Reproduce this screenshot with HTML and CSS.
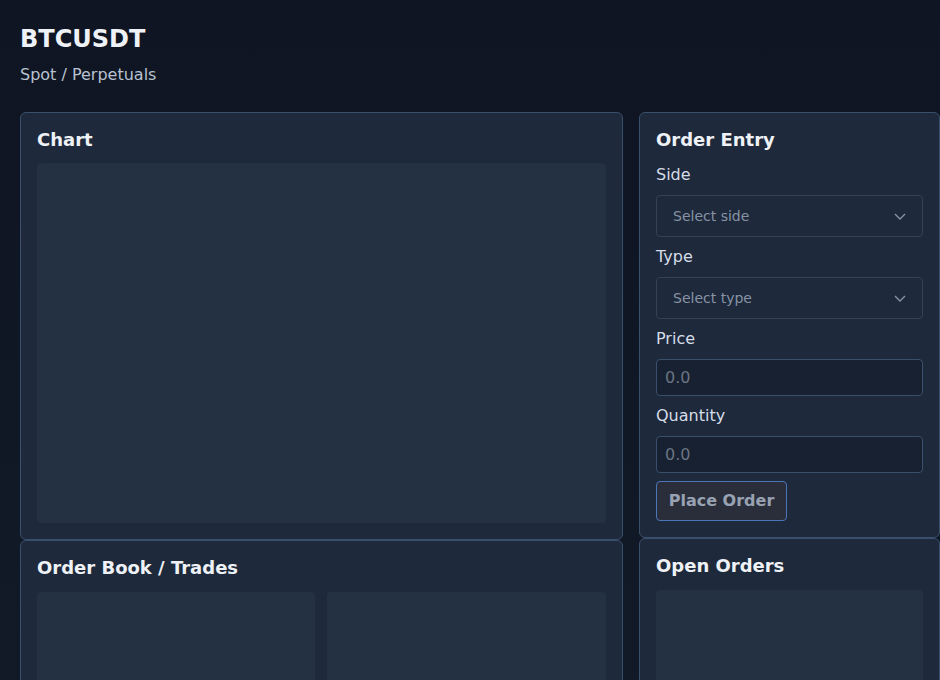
FILE: index.html
```html
<!DOCTYPE html>
<html lang="en">
<head>
<meta charset="utf-8">
<title>BTCUSDT</title>
<link rel="stylesheet" href="styles.css">
</head>
<body>
<div class="page">
  <header class="header">
    <h1 class="symbol">BTCUSDT</h1>
    <p class="market">Spot / Perpetuals</p>
  </header>
  <main class="layout">
    <div class="col">
      <section class="card card-chart">
        <h2 class="card-title">Chart</h2>
        <div class="panel chart-area"></div>
      </section>
      <section class="card card-lower">
        <h2 class="card-title">Order Book / Trades</h2>
        <div class="book-grid">
          <div class="panel book-pane"></div>
          <div class="panel book-pane"></div>
        </div>
      </section>
    </div>
    <div class="col">
      <section class="card card-entry">
        <h2 class="card-title">Order Entry</h2>
        <form class="form">
          <label class="label">Side</label>
          <div class="select"><span>Select side</span>
            <svg class="chev" width="14" height="14" viewBox="0 0 14 14"><path d="M2 5l5 5 5-5" fill="none" stroke="currentColor" stroke-width="1.4"/></svg>
          </div>
          <label class="label">Type</label>
          <div class="select"><span>Select type</span>
            <svg class="chev" width="14" height="14" viewBox="0 0 14 14"><path d="M2 5l5 5 5-5" fill="none" stroke="currentColor" stroke-width="1.4"/></svg>
          </div>
          <label class="label">Price</label>
          <input class="input" type="text" placeholder="0.0">
          <label class="label">Quantity</label>
          <input class="input" type="text" placeholder="0.0">
          <div class="actions"><button class="btn" type="button" disabled>Place Order</button></div>
        </form>
      </section>
      <section class="card card-lower">
        <h2 class="card-title">Open Orders</h2>
        <div class="panel orders-pane"></div>
      </section>
    </div>
  </main>
</div>
</body>
</html>
```
FILE: styles.css
```css
* { box-sizing: border-box; }
html, body {
  margin: 0;
  padding: 0;
  overflow: hidden;
}
body {
  font-family: "DejaVu Sans", sans-serif;
  color: #e2e8f0;
  background: linear-gradient(180deg, #0f1522 0%, #121a28 100%);
  min-height: 680px;
}
.page {
  padding: 20px 0 0 20px;
  width: 940px;
}
.header { height: 92px; }
.symbol {
  margin: 0;
  padding-top: 5px;
  font-size: 24px;
  line-height: 28px;
  font-weight: 700;
  color: #eef2f7;
}
.market {
  margin: 10px 0 0;
  font-size: 16px;
  line-height: 24px;
  color: #b8c2d0;
}
.layout {
  display: grid;
  grid-template-columns: 603px 301px;
  column-gap: 16px;
  align-items: start;
}
.col {
  display: flex;
  flex-direction: column;
}
.card {
  background: #1e293b;
  border: 1px solid #3a4f6b;
  border-radius: 6px;
  padding: 15px 16px 16px;
}
.card-title {
  margin: 0 0 12px;
  font-size: 18px;
  line-height: 23px;
  font-weight: 700;
  color: #eef2f7;
}
.card-lower .card-title { margin-bottom: 13px; }
.panel {
  background: #243142;
  border-radius: 4px;
}
.chart-area { height: 360px; }
.book-grid {
  display: grid;
  grid-template-columns: 278px 1fr;
  gap: 12px;
}
.book-pane { height: 200px; }
.orders-pane { height: 200px; }
.form {
  display: flex;
  flex-direction: column;
  gap: 8px;
  margin: 0;
}
.label {
  font-size: 16px;
  line-height: 24px;
  color: #d5dde8;
}
.select {
  height: 42px;
  border: 1px solid #334257;
  border-radius: 4px;
  background: #1e293b;
  display: flex;
  align-items: center;
  justify-content: space-between;
  padding: 0 15px 0 16px;
  font-size: 14px;
  color: #8793a5;
}
.chev { color: #8793a5; }
.input {
  height: 37px;
  border: 1px solid #3a4f6b;
  border-radius: 4px;
  background: #172131;
  padding: 0 8px;
  font-family: "DejaVu Sans", sans-serif;
  font-size: 16px;
  color: #e2e8f0;
  outline: none;
}
.input::placeholder { color: #6b7482; }
.actions { display: flex; }
.btn {
  width: 131px;
  height: 40px;
  padding: 0 0 2px;
  border: 1px solid #4a76b8;
  border-radius: 4px;
  background: #2a2e3b;
  color: #98a2b2;
  font-family: "DejaVu Sans", sans-serif;
  font-size: 16px;
  font-weight: 700;
}
```
